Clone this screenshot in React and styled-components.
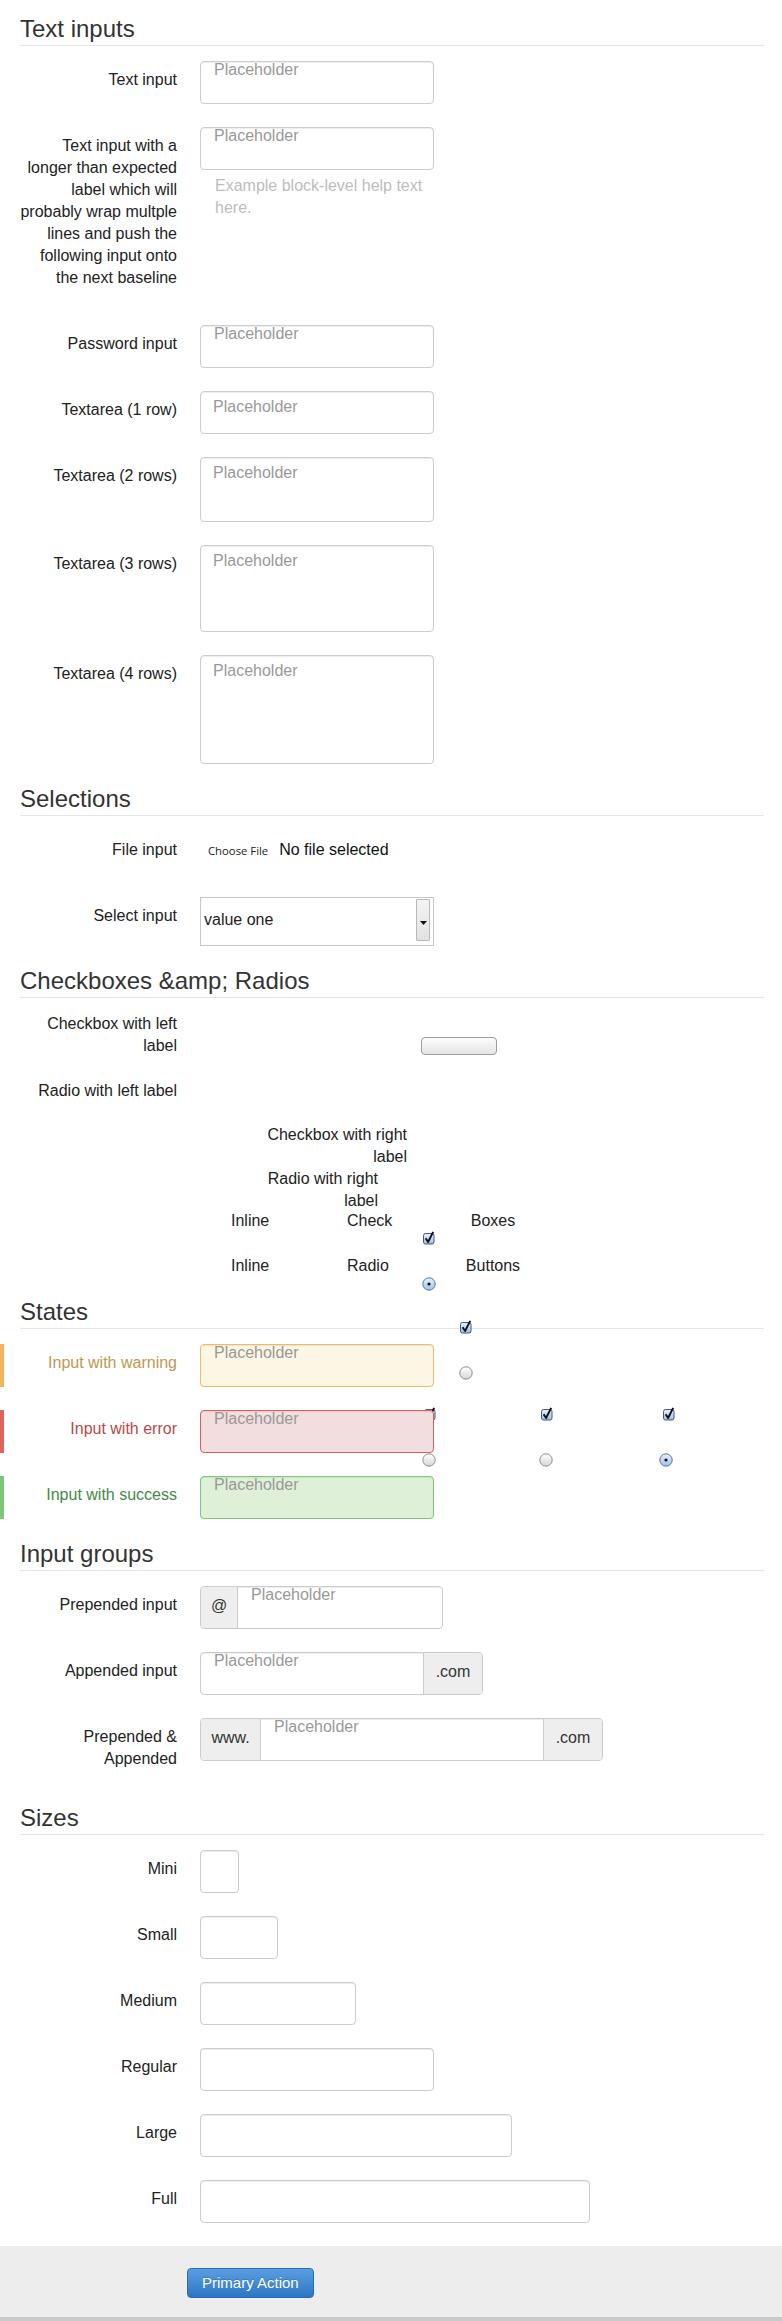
import React from "react";
import styled, { createGlobalStyle } from "styled-components";

const GlobalStyle = createGlobalStyle`
  html, body { margin: 0; padding: 0; background: #fff; overflow: hidden; }
  body { font-family: "Liberation Sans", Arial, Helvetica, sans-serif; }
  *, *::before, *::after { box-sizing: border-box; }
`;

const Page = styled.div`
  position: relative;
  width: 782px;
  padding-top: 17px;
  font-family: "Liberation Sans", Arial, Helvetica, sans-serif;
  font-size: 16px;
  line-height: 22px;
  color: #222;
`;

const Section = styled.section`
  padding: 0 18px 0 20px;
`;

const Legend = styled.h2`
  margin: 0 0 15px;
  padding: 0 0 5px;
  font-size: 24px;
  line-height: 23px;
  font-weight: normal;
  color: #333;
  border-bottom: 1px solid #e5e5e5;
`;

const Row = styled.div`
  display: grid;
  grid-template-columns: 160px 1fr;
  column-gap: 20px;
  margin-bottom: ${(p) => (p.$gap !== undefined ? p.$gap : 23)}px;
  ${(p) =>
    p.$bar
      ? `margin-left: -20px; padding-left: 16px; border-left: 4px solid ${p.$bar};`
      : ""}
`;

const Label = styled.label`
  display: block;
  text-align: right;
  padding: ${(p) => (p.$flush ? "0 3px 0 0" : "8px 3px 13px 0")};
  color: ${(p) => p.$tone || "#222"};
`;

const Controls = styled.div`
  min-width: 0;
`;

const TextInput = styled.input`
  display: block;
  position: relative;
  z-index: 1;
  width: ${(p) => p.$w || 234}px;
  height: 43px;
  margin: 0;
  padding: 0 13px 25px;
  font-family: "Liberation Sans", Arial, sans-serif;
  font-size: 16px;
  line-height: 16px;
  color: #333;
  background: ${(p) => p.$bg || "#fff"};
  border: 1px solid ${(p) => p.$border || "#ccc"};
  border-radius: 4px;
  box-shadow: inset 0 1px 1px rgba(0, 0, 0, 0.075);
  outline: none;
  &::placeholder {
    color: #999;
    opacity: 1;
  }
`;

const TextArea = styled.textarea`
  display: block;
  width: 234px;
  height: ${(p) => p.$h}px;
  margin: 0;
  padding: 3.5px 12px;
  font-family: "Liberation Sans", Arial, sans-serif;
  font-size: 16px;
  line-height: 22px;
  color: #333;
  background: #fff;
  border: 1px solid #ccc;
  border-radius: 4px;
  box-shadow: inset 0 1px 1px rgba(0, 0, 0, 0.075);
  resize: none;
  outline: none;
  overflow: hidden;
  &::placeholder {
    color: #999;
    opacity: 1;
  }
`;

const HelpBlock = styled.p`
  width: 234px;
  margin: 5px 0 0;
  padding-left: 15px;
  color: #bdbdbd;
`;

/* ---------- Selections ---------- */

const FileControl = styled.div`
  display: flex;
  align-items: baseline;
  gap: 11px;
  padding: 8px 0 0 8px;
`;

const FileButton = styled.span`
  font-family: "Open Sans", "DejaVu Sans", sans-serif;
  font-size: 11.3px;
  color: #222;
`;

const FileStatus = styled.span`
  color: #111;
`;

const SelectBox = styled.div`
  display: flex;
  width: 234px;
  height: 49px;
  padding: 1px 3px 4px 3px;
  border: 1px solid #c8c8c8;
  background: #fff;
`;

const SelectValue = styled.span`
  flex: 1;
  padding-top: 10px;
  color: #222;
`;

const SelectArrow = styled.span`
  display: flex;
  align-items: center;
  justify-content: center;
  width: 14px;
  padding-top: 5px;
  border: 1px solid #b8b8b8;
  border-radius: 1px;
  background: linear-gradient(#f4f4f4, #e2e2e2);
`;

/* ---------- Checkboxes ---------- */

const FakeToggle = styled.span`
  display: block;
  width: 76px;
  height: 18px;
  margin: 24px 0 0 221px;
  border: 1px solid #9c9c9c;
  border-radius: 4px;
  background: linear-gradient(#fdfdfd, #e4e4e4);
`;

const RightLabel = styled.div`
  width: ${(p) => p.$w}px;
  margin-left: 247px;
  text-align: right;
`;

const InlineLine = styled.div`
  display: flex;
  margin: ${(p) => p.$top}px 0 0 211px;
`;

const InlineWord = styled.span`
  width: ${(p) => p.$w}px;
  text-align: ${(p) => p.$align || "left"};
`;

const Stray = styled.span`
  position: absolute;
  left: ${(p) => p.$x}px;
  top: ${(p) => p.$y}px;
  display: block;
  width: 14px;
  height: 14px;
  line-height: 0;
`;

/* ---------- Input groups ---------- */

const InputGroup = styled.div`
  display: flex;
  width: ${(p) => p.$w}px;
  height: 43px;
  border: 1px solid #ccc;
  border-radius: 4px;
  overflow: hidden;
  box-shadow: inset 0 1px 1px rgba(0, 0, 0, 0.075);
`;

const Addon = styled.span`
  flex: 0 0 ${(p) => p.$w}px;
  padding-top: 8px;
  text-align: center;
  color: #333;
  background: #eee;
  ${(p) => (p.$side === "left" ? "border-right: 1px solid #ccc;" : "border-left: 1px solid #ccc;")}
`;

const GroupInput = styled.input`
  flex: 1;
  min-width: 0;
  height: 41px;
  margin: 0;
  padding: 0 13px 25px;
  font-family: "Liberation Sans", Arial, sans-serif;
  font-size: 16px;
  line-height: 16px;
  color: #333;
  background: transparent;
  border: 0;
  outline: none;
  &::placeholder {
    color: #999;
    opacity: 1;
  }
`;

/* ---------- Form actions ---------- */

const FormActions = styled.div`
  padding: 22px 0 19px 187px;
  background: #ededed;
  border-bottom: 4px solid #c9c9c9;
`;

const PrimaryButton = styled.button`
  height: 30px;
  margin: 0;
  padding: 0 14px;
  font-family: "Liberation Sans", Arial, sans-serif;
  font-size: 15px;
  line-height: 28px;
  color: #fff;
  text-shadow: 0 -1px 0 rgba(0, 0, 0, 0.2);
  border: 1px solid #2a6cb3;
  border-radius: 4px;
  background: linear-gradient(#5b9fe1, #2b76c4);
  cursor: pointer;
`;

/* ---------- Icons ---------- */

function CheckIcon() {
  return (
    <svg width="14" height="14" viewBox="0 0 14 14">
      <defs>
        <linearGradient id="cbFill" x1="0" y1="0" x2="0" y2="1">
          <stop offset="0" stopColor="#e6f0fc" />
          <stop offset="1" stopColor="#9cbfea" />
        </linearGradient>
      </defs>
      <rect x="1.5" y="2.5" width="10.5" height="10.5" rx="2" fill="url(#cbFill)" stroke="#45597a" />
      <path d="M3.6 7.2 L6.1 11 L11.2 0.8" fill="none" stroke="#111" strokeWidth="1.9" strokeLinejoin="round" />
    </svg>
  );
}

function RadioIcon({ checked }) {
  return (
    <svg width="14" height="14" viewBox="0 0 14 14">
      <defs>
        <linearGradient id="rdOn" x1="0" y1="0" x2="0" y2="1">
          <stop offset="0" stopColor="#e8f1fc" />
          <stop offset="1" stopColor="#9fc1ea" />
        </linearGradient>
        <linearGradient id="rdOff" x1="0" y1="0" x2="0" y2="1">
          <stop offset="0" stopColor="#ffffff" />
          <stop offset="1" stopColor="#d6d6d6" />
        </linearGradient>
      </defs>
      <circle
        cx="7"
        cy="7"
        r="6.2"
        fill={checked ? "url(#rdOn)" : "url(#rdOff)"}
        stroke={checked ? "#56769c" : "#8d8d8d"}
      />
      {checked && <circle cx="7" cy="7" r="1.6" fill="#111" />}
    </svg>
  );
}

function ArrowDown() {
  return (
    <svg width="7" height="4" viewBox="0 0 7 4">
      <path d="M0 0 H7 L3.5 4 Z" fill="#111" />
    </svg>
  );
}

const strays = [
  { kind: "check", x: 422, y: 1231 },
  { kind: "radioOn", x: 422, y: 1277 },
  { kind: "check", x: 459, y: 1320 },
  { kind: "radioOff", x: 459, y: 1365.5 },
  { kind: "check", x: 423, y: 1406.5 },
  { kind: "check", x: 540, y: 1406.5 },
  { kind: "check", x: 662, y: 1406.5 },
  { kind: "radioOff", x: 422, y: 1453 },
  { kind: "radioOff", x: 538.5, y: 1453 },
  { kind: "radioOn", x: 659, y: 1453 },
];

const textareas = [
  { label: "Textarea (1 row)", h: 43 },
  { label: "Textarea (2 rows)", h: 65 },
  { label: "Textarea (3 rows)", h: 87 },
  { label: "Textarea (4 rows)", h: 109 },
];

const states = [
  { label: "Input with warning", tone: "#c09853", bar: "#f3b460", bg: "#fcf7e4", border: "#f3b963" },
  { label: "Input with error", tone: "#b94a48", bar: "#de625d", bg: "#f2dede", border: "#dc605c" },
  { label: "Input with success", tone: "#468847", bar: "#7cc67c", bg: "#dff0d8", border: "#7fc47f" },
];

const sizes = [
  { label: "Mini", w: 39 },
  { label: "Small", w: 78 },
  { label: "Medium", w: 156 },
  { label: "Regular", w: 234 },
  { label: "Large", w: 312 },
  { label: "Full", w: 390 },
];

export default function App() {
  return (
    <Page>
      <GlobalStyle />

      <Section>
        <Legend>Text inputs</Legend>
        <Row>
          <Label>Text input</Label>
          <Controls>
            <TextInput type="text" placeholder="Placeholder" />
          </Controls>
        </Row>
        <Row>
          <Label>
            Text input with a longer than expected label which will probably wrap multple lines and push the following
            input onto the next baseline
          </Label>
          <Controls>
            <TextInput type="text" placeholder="Placeholder" />
            <HelpBlock>Example block-level help text here.</HelpBlock>
          </Controls>
        </Row>
        <Row>
          <Label>Password input</Label>
          <Controls>
            <TextInput type="password" placeholder="Placeholder" />
          </Controls>
        </Row>
        {textareas.map((t) => (
          <Row key={t.label}>
            <Label>{t.label}</Label>
            <Controls>
              <TextArea $h={t.h} placeholder="Placeholder" />
            </Controls>
          </Row>
        ))}
      </Section>

      <Section>
        <Legend>Selections</Legend>
        <Row>
          <Label>File input</Label>
          <Controls>
            <FileControl>
              <FileButton>Choose File</FileButton>
              <FileStatus>No file selected</FileStatus>
            </FileControl>
          </Controls>
        </Row>
        <Row>
          <Label>Select input</Label>
          <Controls>
            <SelectBox>
              <SelectValue>value one</SelectValue>
              <SelectArrow>
                <ArrowDown />
              </SelectArrow>
            </SelectBox>
          </Controls>
        </Row>
      </Section>

      <Section>
        <Legend>{"Checkboxes &amp; Radios"}</Legend>
        <Row>
          <Label $flush>Checkbox with left label</Label>
          <Controls>
            <FakeToggle />
          </Controls>
        </Row>
        <Row $gap={22}>
          <Label $flush>Radio with left label</Label>
          <Controls />
        </Row>
        <RightLabel $w={140}>Checkbox with right label</RightLabel>
        <RightLabel $w={111}>Radio with right label</RightLabel>
        <InlineLine $top={-2}>
          <InlineWord $w={116}>Inline</InlineWord>
          <InlineWord $w={100}>Check</InlineWord>
          <InlineWord $w={92} $align="center">
            Boxes
          </InlineWord>
        </InlineLine>
        <InlineLine $top={23}>
          <InlineWord $w={116}>Inline</InlineWord>
          <InlineWord $w={100}>Radio</InlineWord>
          <InlineWord $w={92} $align="center">
            Buttons
          </InlineWord>
        </InlineLine>
        <Row $gap={23} />
        {strays.map((s, i) => (
          <Stray key={i} $x={s.x} $y={s.y}>
            {s.kind === "check" ? <CheckIcon /> : <RadioIcon checked={s.kind === "radioOn"} />}
          </Stray>
        ))}
      </Section>

      <Section>
        <Legend>States</Legend>
        {states.map((s) => (
          <Row key={s.label} $bar={s.bar}>
            <Label $tone={s.tone}>{s.label}</Label>
            <Controls>
              <TextInput type="text" placeholder="Placeholder" $bg={s.bg} $border={s.border} />
            </Controls>
          </Row>
        ))}
      </Section>

      <Section>
        <Legend>Input groups</Legend>
        <Row>
          <Label>Prepended input</Label>
          <Controls>
            <InputGroup $w={243}>
              <Addon $side="left" $w={37}>
                @
              </Addon>
              <GroupInput type="text" placeholder="Placeholder" />
            </InputGroup>
          </Controls>
        </Row>
        <Row>
          <Label>Appended input</Label>
          <Controls>
            <InputGroup $w={283}>
              <GroupInput type="text" placeholder="Placeholder" />
              <Addon $side="right" $w={59}>
                .com
              </Addon>
            </InputGroup>
          </Controls>
        </Row>
        <Row>
          <Label>Prepended &amp; Appended</Label>
          <Controls>
            <InputGroup $w={403}>
              <Addon $side="left" $w={60}>
                www.
              </Addon>
              <GroupInput type="text" placeholder="Placeholder" />
              <Addon $side="right" $w={59}>
                .com
              </Addon>
            </InputGroup>
          </Controls>
        </Row>
      </Section>

      <Section>
        <Legend>Sizes</Legend>
        {sizes.map((s) => (
          <Row key={s.label}>
            <Label>{s.label}</Label>
            <Controls>
              <TextInput type="text" $w={s.w} />
            </Controls>
          </Row>
        ))}
      </Section>

      <FormActions>
        <PrimaryButton type="button">Primary Action</PrimaryButton>
      </FormActions>
    </Page>
  );
}
